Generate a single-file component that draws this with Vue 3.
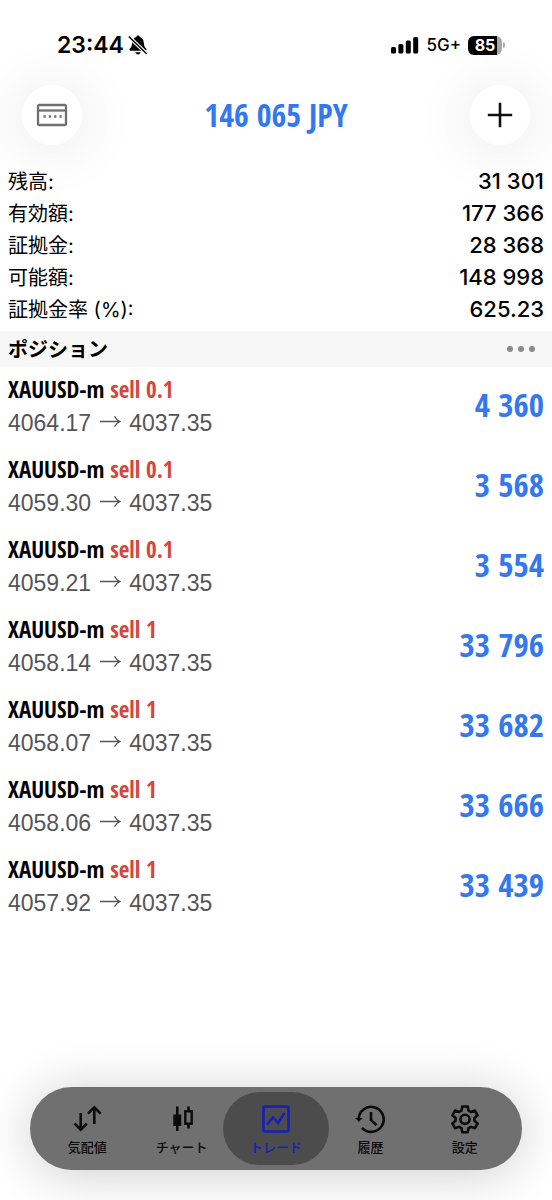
<script setup>
const summary = [
  { label: '残高:', value: '31 301' },
  { label: '有効額:', value: '177 366' },
  { label: '証拠金:', value: '28 368' },
  { label: '可能額:', value: '148 998' },
  { label: '証拠金率 (%):', value: '625.23' },
]

const positions = [
  { volume: '0.1', open: '4064.17', profit: '4 360' },
  { volume: '0.1', open: '4059.30', profit: '3 568' },
  { volume: '0.1', open: '4059.21', profit: '3 554' },
  { volume: '1', open: '4058.14', profit: '33 796' },
  { volume: '1', open: '4058.07', profit: '33 682' },
  { volume: '1', open: '4058.06', profit: '33 666' },
  { volume: '1', open: '4057.92', profit: '33 439' },
]
const current = '4037.35'

const tabs = [
  { id: 'quotes', label: '気配値' },
  { id: 'chart', label: 'チャート' },
  { id: 'trade', label: 'トレード' },
  { id: 'history', label: '履歴' },
  { id: 'settings', label: '設定' },
]
</script>

<template>
  <div class="app">
    <div class="status">
      <div class="status-group left">
        <span class="clock">23:44</span>
        <svg class="bell" viewBox="0 0 20 20" aria-hidden="true">
          <path d="M10 0.6c-.9 0-1.5.5-1.7 1.3C5.700 2.700 4.400 4.900 4.200 7.400c-.2 3.200-.8 4.800-2.300 6.100-.8.7-.6 2.300.7 2.300h14.800c1.300 0 1.500-1.600.7-2.300-1.500-1.300-2.100-2.900-2.300-6.100-.2-2.500-1.500-4.700-4.100-5.500C11.500 1.100 10.900.6 10 .6z" />
          <path d="M7.400 17.200h5.200c-.3 1.300-1.300 2.200-2.600 2.200s-2.300-.9-2.600-2.200z" />
          <path d="M.8 1.600 18.800 18.900" stroke="#fff" stroke-width="3.600" />
          <path d="M.8 1.600 18.800 18.900" stroke="#000" stroke-width="1.400" />
        </svg>
      </div>
      <div class="status-group">
        <svg class="signal" viewBox="0 0 28 18" aria-hidden="true">
          <rect x="0" y="11" width="5" height="6.500" rx="1.500" />
          <rect x="7.400" y="8" width="5" height="9.500" rx="1.500" />
          <rect x="14.800" y="4.500" width="5" height="13" rx="1.500" />
          <rect x="22.200" y="1" width="5" height="16.500" rx="1.500" />
        </svg>
        <span class="network">5G+</span>
        <span class="battery"><span class="cell">85</span><i class="cap"></i></span>
      </div>
    </div>

    <header class="header">
      <button class="round" type="button" aria-label="口座">
        <svg width="32" height="24" viewBox="0 0 32 24" fill="none" stroke="#707070" stroke-width="2.300" aria-hidden="true">
          <rect x="2" y="2" width="28" height="20" rx="1.500" />
          <path d="M2 7.500h28" />
          <path d="M7.500 13.500h2.300m3 0h2.300m3 0h2.300m3 0h2.300" />
        </svg>
      </button>
      <h1 class="total">146 065 JPY</h1>
      <button class="round" type="button" aria-label="新規注文">
        <svg width="26" height="26" viewBox="0 0 26 26" fill="none" stroke="#111" stroke-width="2.600" aria-hidden="true">
          <path d="M13 .8v24.400M.8 13h24.400" />
        </svg>
      </button>
    </header>

    <main>
      <dl class="summary">
        <div v-for="row in summary" :key="row.label" class="summary-row">
          <dt>{{ row.label }}</dt>
          <dd>{{ row.value }}</dd>
        </div>
      </dl>

      <div class="section">
        <h2>ポジション</h2>
        <button class="more" type="button" aria-label="その他">
          <i></i><i></i><i></i>
        </button>
      </div>

      <ul class="positions">
        <li v-for="p in positions" :key="p.open" class="position">
          <div>
            <div class="symbol">XAUUSD-m <span class="side">sell {{ p.volume }}</span></div>
            <div class="prices">
              <span>{{ p.open }}</span>
              <svg width="22" height="14" viewBox="0 0 22 14" fill="none" stroke="#555558" stroke-width="1.300" aria-hidden="true">
                <path d="M1 5.500h20M15.500 .3c1.200 2.500 3 4.200 5.500 5.200-2.500 1-4.300 2.700-5.500 5.200" />
              </svg>
              <span>{{ current }}</span>
            </div>
          </div>
          <div class="profit">{{ p.profit }}</div>
        </li>
      </ul>
    </main>

    <nav class="tabs">
      <button
        v-for="tab in tabs"
        :key="tab.id"
        class="tab"
        :class="{ active: tab.id === 'trade' }"
        type="button"
      >
        <svg class="tab-icon" viewBox="0 0 30 30" fill="none" stroke="currentColor" stroke-width="2.600" aria-hidden="true">
          <template v-if="tab.id === 'quotes'">
            <path d="M8.700 9v16.500M2.500 19.500l6.200 6.200 6.200-6.200M22.300 20V3.500M16 9.700l6.300-6.300 6.300 6.300" />
          </template>
          <template v-else-if="tab.id === 'chart'">
            <path d="M10.300 2.500v24.500M21.500 2.500v4.500M21.500 20v4.500" />
            <rect x="6.300" y="10.500" width="8" height="11.500" fill="currentColor" stroke="none" />
            <rect x="18.300" y="7.300" width="6.400" height="12.400" stroke-width="2.400" />
          </template>
          <template v-else-if="tab.id === 'trade'">
            <rect x="2.500" y="2.500" width="25" height="25" rx="1.500" />
            <path d="M6 20.500l6-7 5 5.500 6.500-10" />
          </template>
          <template v-else-if="tab.id === 'history'">
            <path d="M3.700 16A12.500 12.500 0 1 1 7 23.800" />
            <path d="M.2 14h7.400l-3.700 4z" fill="currentColor" stroke="none" />
            <path d="M16 8v8l5.500 5.200" />
          </template>
          <template v-else>
            <path d="M12.300 2.500h5.400l.8 4.100 2.400 1.400 4-1.400 2.700 4.700-3.200 2.700v2.800l3.200 2.700-2.700 4.700-4-1.400-2.400 1.400-.8 4.100h-5.400l-.8-4.100-2.400-1.400-4 1.400-2.700-4.700 3.200-2.700V14l-3.200-2.700 2.700-4.700 4 1.400 2.400-1.400z" stroke-linejoin="round" />
            <circle cx="15" cy="15.300" r="4.600" />
          </template>
        </svg>
        <span>{{ tab.label }}</span>
      </button>
    </nav>
  </div>
</template>

<style>
body {
  margin: 0;
  background: #fff;
}
</style>

<style scoped>
.app {
  box-sizing: border-box;
  min-height: 100vh;
  display: flex;
  flex-direction: column;
  overflow: hidden;
  background: #fff;
  color: #000;
  font-family: "Liberation Sans", "Noto Sans CJK JP", sans-serif;
}
button {
  border: 0;
  padding: 0;
  font: inherit;
  background: none;
}
.status {
  display: flex;
  justify-content: space-between;
  height: 30px;
  padding: 30px 47px 0 57px;
}
.status-group {
  display: flex;
  align-items: center;
  gap: 7px;
}
.status-group.left {
  gap: 4px;
}
.clock {
  font: 600 23px/30px Inter, sans-serif;
}
.bell {
  width: 20px;
  height: 20px;
}
.signal {
  width: 28px;
  height: 18px;
}
.network {
  font: 500 17px/30px Inter, sans-serif;
}
.battery {
  display: flex;
  align-items: center;
  gap: 1px;
}
.cell {
  width: 34px;
  border-radius: 6px;
  background: linear-gradient(90deg, #000 85%, #a8a8a8 85%);
  color: #fff;
  font: 700 16px/19px Inter, sans-serif;
  text-align: center;
}
.cap {
  width: 2px;
  height: 6px;
  border-radius: 0 2px 2px 0;
  background: #b0b0b0;
}
.header {
  display: flex;
  align-items: center;
  justify-content: space-between;
  padding: 25px 22px 20px;
}
.round {
  display: flex;
  align-items: center;
  justify-content: center;
  width: 60px;
  height: 60px;
  border-radius: 50%;
  background: #fff;
  box-shadow: 0 4px 60px rgba(0, 0, 0, 0.11);
}
.total,
.profit,
.symbol {
  font-family: "Open Sans Condensed", "Roboto Condensed", "Liberation Sans Narrow", sans-serif;
}
.total {
  margin: 0;
  color: #3478f0;
  font-size: 32px;
  line-height: 36px;
  font-weight: 700;
}
.summary {
  margin: 0;
  padding: 0 8px 6px;
}
.summary-row {
  display: flex;
  align-items: baseline;
  justify-content: space-between;
}
.summary dt {
  font-family: Inter, "Noto Sans CJK JP", sans-serif;
  font-size: 20px;
  line-height: 28px;
}
.summary dd {
  margin: 0;
  font: 500 22px/32px Inter, sans-serif;
}
.section {
  display: flex;
  align-items: center;
  justify-content: space-between;
  padding: 0 17px 0 8px;
  background: #f7f7f7;
}
.section h2 {
  margin: 0;
  font: 700 20px/36px "Noto Sans CJK JP", sans-serif;
}
.more {
  display: flex;
  gap: 5px;
}
.more i {
  width: 6px;
  height: 6px;
  border-radius: 50%;
  background: #8b8b8b;
}
.positions {
  margin: 0;
  padding: 6px 8px 0;
  list-style: none;
}
.position {
  display: flex;
  align-items: flex-start;
  justify-content: space-between;
  padding-bottom: 13px;
}
.symbol {
  font-size: 23px;
  line-height: 33px;
  font-weight: 700;
}
.side {
  color: #d8453a;
}
.prices {
  display: flex;
  align-items: center;
  gap: 8px;
  color: #555558;
  font-size: 23px;
  line-height: 34px;
}
.profit {
  color: #3478f0;
  font-size: 33px;
  line-height: 63px;
  font-weight: 700;
}
.tabs {
  display: flex;
  margin: auto 30px 30px;
  padding: 5px 10px;
  border-radius: 42px;
  background: #707070;
  box-shadow: 0 4px 50px rgba(0, 0, 0, 0.2);
}
.tab {
  position: relative;
  z-index: 0;
  flex: 1;
  display: flex;
  flex-direction: column;
  align-items: center;
  gap: 4px;
  padding: 12px 0 9px;
  color: #0c0c0c;
  font: 500 13px/18px "Noto Sans CJK JP", sans-serif;
}
.tab.active {
  color: #1420b8;
}
.tab.active::before {
  content: "";
  position: absolute;
  z-index: -1;
  inset: 0 -6px;
  border-radius: 37px;
  background: #4c4c4c;
}
.tab-icon {
  width: 30px;
  height: 30px;
}
</style>
